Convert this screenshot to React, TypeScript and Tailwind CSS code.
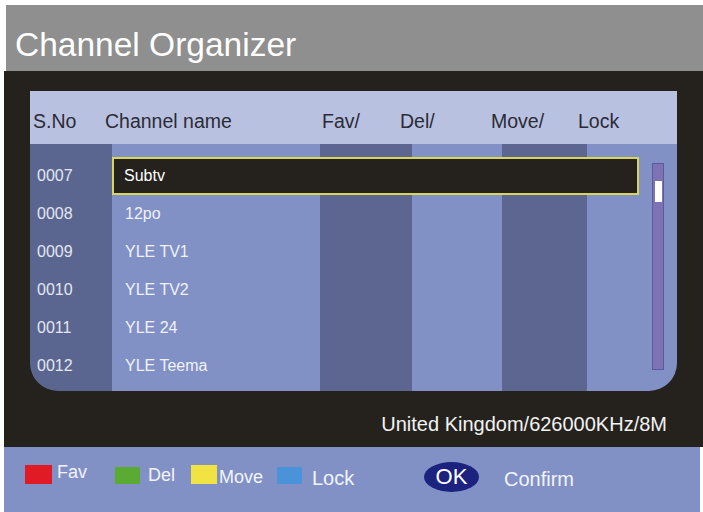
import React from "react";

const CHANNELS = [
  { no: "0007", name: "Subtv" },
  { no: "0008", name: "12po" },
  { no: "0009", name: "YLE TV1" },
  { no: "0010", name: "YLE TV2" },
  { no: "0011", name: "YLE 24" },
  { no: "0012", name: "YLE Teema" },
];

export default function App() {
  return (
    <div className="w-[703px] h-[512px] bg-white pt-[5px] overflow-hidden font-['Liberation_Sans',Arial,sans-serif]">
      {/* title bar */}
      <div className="ml-[6px] h-[66px] bg-[#8f8f8f] pl-[9px] pt-[23px]">
        <h1 className="text-[33.5px] leading-none text-white">Channel Organizer</h1>
      </div>

      {/* main area */}
      <div className="ml-[4px] h-[376px] bg-[#25221d] pl-[26px] pr-[26px] pt-[20px] flex flex-col">
        <div className="w-[647px]">
          <div className="h-[53px] bg-[#b9c1e1] flex items-start pt-[21px] pl-[3px] text-[19.5px] leading-none text-[#2b2b36]">
            <span className="w-[72px]">S.No</span>
            <span className="w-[217px]">Channel name</span>
            <span className="w-[78px]">Fav/</span>
            <span className="w-[91px]">Del/</span>
            <span className="w-[87px]">Move/</span>
            <span>Lock</span>
          </div>
          <div className="relative h-[247px] rounded-b-[28px] overflow-hidden pt-[13px] bg-[linear-gradient(to_right,#5b6690_0px,#5b6690_82px,#8190c5_82px,#8190c5_290px,#5c6690_290px,#5c6690_382px,#8190c5_382px,#8190c5_472px,#5c6690_472px,#5c6690_557px,#8190c5_557px,#8190c5_647px)]">
            {CHANNELS.map((c, i) => (
              <div key={c.no} className="h-[38px] flex items-center text-[16px]">
                <span className="w-[82px] pl-[7px] text-[#e3e6f2]">{c.no}</span>
                {i === 0 ? (
                  <div className="w-[527px] h-[38px] bg-[#25221d] border-2 border-[#d9d55b] flex items-center pl-[10px] text-white">
                    {c.name}
                  </div>
                ) : (
                  <span className="pl-[13px] text-[#f0f2fa]">{c.name}</span>
                )}
              </div>
            ))}
            {/* scrollbar */}
            <div className="absolute left-[622px] top-[19px] w-[12px] h-[207px] bg-[#7d72b4] border border-[#5a5a9c]">
              <div className="ml-[2px] mt-[17px] w-[7px] h-[21px] bg-white" />
            </div>
          </div>
        </div>
        <div className="mt-[23px] self-end mr-[10px] text-[20px] leading-none text-[#f2f2f2]">
          United Kingdom/626000KHz/8M
        </div>
      </div>

      {/* key bar */}
      <div className="ml-[4px] w-[696px] h-[65px] bg-[#8190c5] flex items-start text-[#f2f4fb] leading-none">
        <span className="ml-[21px] mt-[18px] w-[27px] h-[19px] bg-[#e01b25]" />
        <span className="ml-[5px] mt-[16px] w-[58px] text-[18px]">Fav</span>
        <span className="mt-[20px] w-[25px] h-[17px] bg-[#5bab33]" />
        <span className="ml-[8px] mt-[19px] w-[43px] text-[18px]">Del</span>
        <span className="mt-[18px] w-[26px] h-[19px] bg-[#f1e341]" />
        <span className="ml-[2px] mt-[21px] w-[58px] text-[18px]">Move</span>
        <span className="mt-[20px] w-[25px] h-[17px] bg-[#4a92da]" />
        <span className="ml-[10px] mt-[21px] w-[112px] text-[20px]">Lock</span>
        <span className="mt-[15px] w-[55px] h-[30px] rounded-[50%] bg-[#1b237f] flex items-center justify-center text-[22px] text-white">
          OK
        </span>
        <span className="ml-[25px] mt-[22px] text-[20px]">Confirm</span>
      </div>
    </div>
  );
}
